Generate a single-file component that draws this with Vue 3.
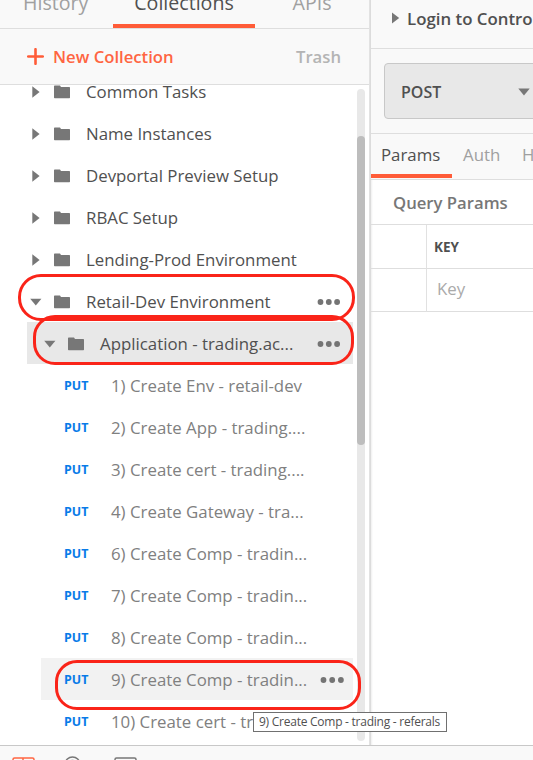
<script setup>
const folders = [
  'Common Tasks',
  'Name Instances',
  'Devportal Preview Setup',
  'RBAC Setup',
  'Lending-Prod Environment',
]
const requests = [
  '1) Create Env - retail-dev',
  '2) Create App - trading....',
  '3) Create cert - trading....',
  '4) Create Gateway - tra...',
  '6) Create Comp - tradin...',
  '7) Create Comp - tradin...',
  '8) Create Comp - tradin...',
  '9) Create Comp - tradin...',
  '10) Create cert - trading...',
]
</script>

<template>
  <div class="app">
    <div class="main">
      <aside class="sidebar">
        <nav class="tabs">
          <span class="tab history">History</span>
          <span class="tab collections">Collections</span>
          <span class="tab apis">APIs</span>
        </nav>
        <div class="actions">
          <svg class="plus" width="17" height="17" viewBox="0 0 17 17"><path d="M8.5 1.2v14.6M1.2 8.5h14.6" stroke="#ff5c38" stroke-width="2.6" stroke-linecap="round" /></svg>
          <span class="new">New Collection</span>
          <span class="trash">Trash</span>
        </div>
        <div class="tree">
          <div class="rows">
            <div v-for="name in folders" :key="name" class="row folder">
              <svg class="caret" width="12" height="12" viewBox="0 0 12 12"><path d="M2.3 .3 9.6 6 2.3 11.7z" /></svg>
              <svg class="icon" width="16" height="14" viewBox="0 0 16 14"><path d="M0 1.2Q0 .5.7.5H6L7 2h8.3q.7 0 .7.7v9.8q0 .8-.7.8H.7Q0 13.3 0 12.5z" /></svg>
              <span>{{ name }}</span>
            </div>
            <div class="row folder">
              <svg class="caret" width="12" height="12" viewBox="0 0 12 12"><path d="M.2 2.800h11.200L5.800 9.500z" /></svg>
              <svg class="icon" width="16" height="14" viewBox="0 0 16 14"><path d="M0 1.2Q0 .5.7.5H6L7 2h8.3q.7 0 .7.7v9.8q0 .8-.7.8H.7Q0 13.3 0 12.5z" /></svg>
              <span>Retail-Dev Environment</span>
              <svg class="dots" width="24" height="8" viewBox="0 0 24 8"><circle cx="3.500" cy="4" r="2.900" /><circle cx="11.800" cy="4" r="2.900" /><circle cx="20.100" cy="4" r="2.900" /></svg>
            </div>
            <div class="row folder nested">
              <svg class="caret" width="12" height="12" viewBox="0 0 12 12"><path d="M.2 2.800h11.200L5.800 9.500z" /></svg>
              <svg class="icon" width="16" height="14" viewBox="0 0 16 14"><path d="M0 1.2Q0 .5.7.5H6L7 2h8.3q.7 0 .7.7v9.8q0 .8-.7.8H.7Q0 13.3 0 12.5z" /></svg>
              <span>Application - trading.ac...</span>
              <svg class="dots" width="24" height="8" viewBox="0 0 24 8"><circle cx="3.500" cy="4" r="2.900" /><circle cx="11.800" cy="4" r="2.900" /><circle cx="20.100" cy="4" r="2.900" /></svg>
            </div>
            <div v-for="(name, i) in requests" :key="name" class="row request" :class="{ hovered: i === 7 }">
              <b class="method">PUT</b>
              <span>{{ name }}</span>
              <svg v-if="i === 7" class="dots" width="24" height="8" viewBox="0 0 24 8"><circle cx="3.500" cy="4" r="2.900" /><circle cx="12.200" cy="4" r="2.900" /><circle cx="20.900" cy="4" r="2.900" /></svg>
            </div>
          </div>
          <div class="scrollbar"><div class="thumb"></div></div>
        </div>
      </aside>
      <section class="builder">
        <header class="title">
          <svg class="caret" width="12" height="12" viewBox="0 0 12 12"><path d="M2 .5 9.200 6 2 11.500z" /></svg>
          <span>Login to Controller</span>
        </header>
        <div class="urlbar">
          <div class="select">
            <span>POST</span>
            <svg width="12" height="8" viewBox="0 0 12 8"><path d="M.3.500h11.400L6 7.500z" fill="#777" /></svg>
          </div>
        </div>
        <nav class="subtabs">
          <span class="subtab active">Params</span>
          <span class="subtab auth">Auth</span>
          <span class="subtab headers">Headers</span>
        </nav>
        <h2 class="heading">Query Params</h2>
        <div class="grid">
          <div class="cell"></div>
          <div class="cell key">KEY</div>
          <div class="cell"></div>
          <div class="cell placeholder">Key</div>
        </div>
      </section>
    </div>
    <footer class="status">
      <svg class="i1" width="23" height="14" viewBox="0 0 23 14"><path d="M1 14V2.500Q1 1 2.500 1h18Q22 1 22 2.500V14M11 1v13" /></svg>
      <svg class="i2" width="17" height="16" viewBox="0 0 17 16"><circle cx="8.500" cy="8.200" r="7.300" /><path d="M5.800 7q0-2.600 2.700-2.600t2.700 2.600" /></svg>
      <svg class="i3" width="23" height="14" viewBox="0 0 23 14"><path d="M1 14V2.500Q1 1 2.500 1h18Q22 1 22 2.500V14" /></svg>
    </footer>
    <div class="mark retail"></div>
    <div class="mark application"></div>
    <div class="mark comp"></div>
    <div class="tooltip">9) Create Comp - trading - referals</div>
  </div>
</template>

<style>
body { margin: 0; overflow: hidden; }
</style>

<style scoped>
* { box-sizing: border-box; }
.app { position: relative; width: 533px; height: 760px; overflow: hidden; background: #fff; color: #505050; font: 16.83px "Open Sans", sans-serif; white-space: nowrap; display: flex; flex-direction: column; }
.main { display: flex; height: 745px; flex: none; }
.sidebar { width: 370px; flex: none; border-right: 1px solid #e2e2e2; display: flex; flex-direction: column; }
.tabs { height: 29px; flex: none; display: flex; background: #f9f9f9; border-bottom: 1px solid #dedede; font-size: 19.6px; color: #a0a0a0; overflow: hidden; }
.tab { height: 28px; line-height: 5px; flex: none; }
.tab.history { width: 113px; padding-left: 23px; }
.tab.collections { width: 142px; text-align: center; color: #505050; border-bottom: 4px solid #ff5c38; }
.tab.apis { width: 114px; text-align: center; }
.actions { height: 56px; flex: none; display: flex; align-items: center; padding: 0 28px 0 27px; background: #f9f9f9; border-bottom: 1px solid #dedede; font-size: 16.7px; font-weight: 600; }
.new { color: #ff6542; margin-left: 9px; }
.trash { margin-left: auto; color: #b4b4b4; }
.tree { display: flex; flex: 1; min-height: 0; overflow: hidden; }
.rows { width: 353px; margin-top: -15px; flex: none; }
.row { height: 42px; display: flex; align-items: center; }
.folder { padding-left: 30px; }
.caret { flex: none; fill: #777; }
.row .caret { margin-top: 1px; }
.icon { flex: none; fill: #777; margin: 1px 16px 0 12px; }
.nested { margin-left: 27px; padding-left: 17px; background: #e8e8e8; }
.dots { flex: none; fill: #747474; margin-left: auto; margin-right: 12px; }
.folder .dots { margin-top: 1px; }
.request { margin-left: 41px; padding-left: 23px; color: #808080; }
.method { width: 47px; color: #087be8; font-size: 12.4px; font-weight: 700; }
.hovered { background: #f2f2f2; }
.hovered .dots { margin-right: 9px; margin-top: 1px; }
.scrollbar { width: 8px; height: 652px; margin: 4px 0 0 4px; border-radius: 4px; background: #e8e8e8; }
.thumb { width: 8px; height: 309px; border-radius: 4px; background: #bdbdbd; position: relative; top: 47px; }
.builder { flex: 1; min-width: 0; box-shadow: inset 2px 0 2px -1px #0001; overflow: hidden; border-left: 1px solid #dcdcdc; }
.title { height: 49px; display: flex; align-items: center; padding: 0 0 12px 19px; font-weight: 600; background: #f9f9f9; border-bottom: 1px solid #dedede; }
.title span { margin-left: 5px; }
.urlbar { height: 85px; padding: 14px 0 0 13px; background: #f9f9f9; border-bottom: 1px solid #dedede; }
.select { width: 170px; height: 56px; border: 1px solid #c8c8c8; border-radius: 4px; background: #e8e8e8; display: flex; align-items: center; padding: 1px 23px 0 16px; justify-content: space-between; font-size: 16px; font-weight: 600; }
.subtabs { height: 46px; display: flex; background: #f9f9f9; border-bottom: 1px solid #dedede; color: #a0a0a0; line-height: 42px; }
.subtab { flex: none; }
.subtab.active { width: 81px; height: 44px; padding-left: 10px; color: #505050; border-bottom: 4px solid #ff5c38; }
.subtab.auth { width: 60px; padding-left: 11px; }
.subtab.headers { padding-left: 10px; }
.heading { margin: 0; height: 45px; padding-left: 22px; font-size: 16.7px; font-weight: 600; line-height: 46px; color: #777; border-bottom: 1px solid #dedede; }
.grid { display: grid; grid-template-columns: 56px 1fr; grid-template-rows: 44px 43px; }
.cell { border-right: 1px solid #e1e1e1; border-bottom: 1px solid #dedede; }
.cell:nth-child(2n) { border-right: 0; }
.key { padding-left: 7px; font-size: 13.5px; font-weight: 700; line-height: 44px; }
.placeholder { padding-left: 10px; line-height: 40px; color: #aaa; }
.status { height: 15px; flex: none; display: flex; align-items: flex-start; background: #f9f9f9; border-top: 1px solid #c8c8c8; }
.status svg { fill: none; stroke: #777; stroke-width: 1.5; flex: none; }
.status .i1 { stroke: #ff6542; margin: 11px 0 0 12px; }
.status .i2 { margin: 10px 0 0 29px; }
.status .i3 { margin: 11px 0 0 33px; }
.mark { position: absolute; border: 3px solid #fa2419; }
.mark.retail { left: 18px; top: 274px; width: 337px; height: 47px; border-radius: 23px; }
.mark.application { left: 33px; top: 315px; width: 321px; height: 50px; border-radius: 22px; }
.mark.comp { left: 55px; top: 660px; width: 306px; height: 50px; border-radius: 22px; }
.tooltip { position: absolute; left: 253px; top: 712px; width: 194px; height: 20px; border: 1px solid #707070; background: #fff; color: #505050; font: 12px/18px "Open Sans", sans-serif; letter-spacing: -.25px; padding-left: 5px; }
</style>
